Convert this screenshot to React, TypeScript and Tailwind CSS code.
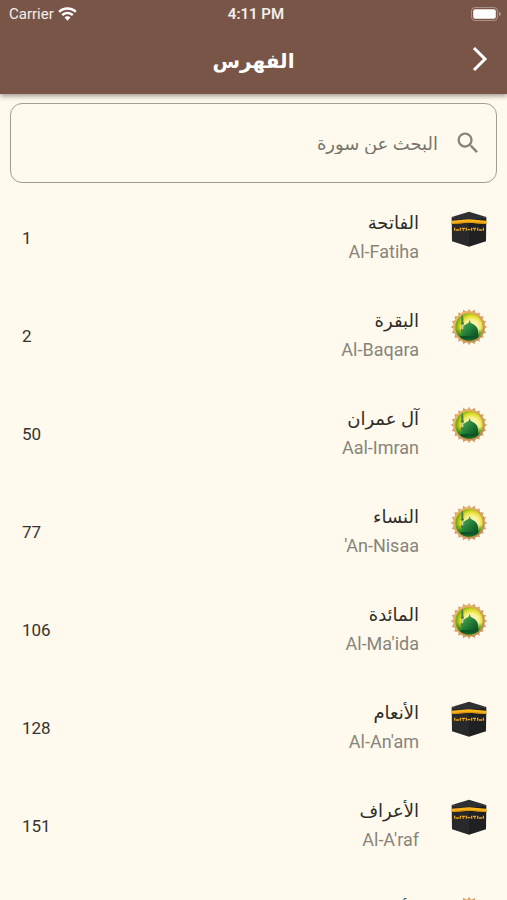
type Surah = {
  name: string;
  latin: string;
  page: number;
  place: 'makkah' | 'madinah';
};

const surahs: Surah[] = [
  { name: 'الفاتحة', latin: 'Al-Fatiha', page: 1, place: 'makkah' },
  { name: 'البقرة', latin: 'Al-Baqara', page: 2, place: 'madinah' },
  { name: 'آل عمران', latin: 'Aal-Imran', page: 50, place: 'madinah' },
  { name: 'النساء', latin: "'An-Nisaa", page: 77, place: 'madinah' },
  { name: 'المائدة', latin: "Al-Ma'ida", page: 106, place: 'madinah' },
  { name: 'الأنعام', latin: "Al-An'am", page: 128, place: 'makkah' },
  { name: 'الأعراف', latin: "Al-A'raf", page: 151, place: 'makkah' },
  { name: 'الأنفال', latin: 'Al-Anfal', page: 177, place: 'madinah' },
];

const WifiIcon = () => (
  <svg width="19" height="14" viewBox="0 0 57 42" fill="#fff" aria-hidden="true">
    <path d="M28.500 1C17.500 1 8 5 1 12l5 5.500c6-6 14-9.500 22.500-9.500s16.500 3.500 22.500 9.500l5-5.500C49 5 39.500 1 28.500 1z" />
    <path d="M28.500 14.500c-7 0-13.500 2.800-18.200 7.300l5 5.300c3.500-3.400 8-5.400 13.200-5.400s9.700 2 13.200 5.400l5-5.300c-4.700-4.500-11.200-7.300-18.200-7.300z" />
    <path d="M28.500 28c-3.400 0-6.500 1.400-8.800 3.600l8.800 9.400 8.800-9.400c-2.300-2.200-5.400-3.600-8.800-3.600z" />
  </svg>
);

const BatteryIcon = () => (
  <svg width="32" height="14" viewBox="0 0 32 14" aria-hidden="true">
    <rect x="0.500" y="0.500" width="26" height="13" rx="3.500" fill="none" stroke="#fff" strokeOpacity="0.35" />
    <rect x="2.200" y="2.200" width="22.600" height="9.600" rx="2" fill="#fff" />
    <path d="M28 4.800c1.200.4 1.900 1.200 1.900 2.200s-.7 1.800-1.900 2.200z" fill="#fff" fillOpacity="0.4" />
  </svg>
);

const ChevronIcon = () => (
  <svg width="16" height="26" viewBox="0 0 16 26" fill="none" stroke="#fff" strokeWidth="3" aria-hidden="true">
    <path d="M2 2l11 11L2 24" />
  </svg>
);

const SearchIcon = () => (
  <svg width="28" height="28" viewBox="0 0 24 24" fill="#87857a" aria-hidden="true">
    <path d="M15.500 14h-.79l-.28-.27A6.471 6.471 0 0 0 16 9.500 6.500 6.500 0 1 0 9.500 16c1.610 0 3.090-.59 4.230-1.570l.27.28v.79l5 4.990L20.490 19l-4.990-5zm-6 0C7.010 14 5 11.990 5 9.500S7.010 5 9.500 5 14 7.010 14 9.500 11.990 14 9.500 14z" />
  </svg>
);

const KaabaIcon = () => (
  <svg width="38" height="38" viewBox="0 0 114 114" aria-hidden="true">
    <path d="M5 21L57 5l52 16-52 13z" fill="#2f3033" />
    <path d="M5 21l52 10v79L6 94z" fill="#29292c" />
    <path d="M109 21L57 31v79l51-16z" fill="#1f2022" />
    <path d="M5 32l52-4 52 4v10l-52-4-52 4z" fill="#fbb416" />
    <path d="M5 39l52-4 52 4v3l-52-4-52 4z" fill="#d98f10" />
    <g fill="#e9a51a">
      <path d="M12 53h4v9h-4zM18 58h9v4h-9zM29 53h4v9h-4zM35 53h10v4H35zM38 58h4v4h-4zM47 53h4v9h-4z" />
      <path d="M53 57h8v4h-8zM63 53h4v9h-4zM69 53h9v4h-9zM72 58h4v4h-4zM81 53h4v9h-4zM87 58h9v4h-9zM98 53h4v9h-4z" />
    </g>
  </svg>
);

const points = Array.from({ length: 20 }, (_, i) => i * 18);

const MosqueIcon = () => (
  <svg width="38" height="38" viewBox="0 0 114 114" aria-hidden="true">
    <defs>
      <radialGradient id="sky" cx="0.6" cy="0.5" r="0.55">
        <stop offset="0" stopColor="#fffde0" />
        <stop offset="0.5" stopColor="#f8f08f" />
        <stop offset="0.75" stopColor="#dfdd24" />
        <stop offset="1" stopColor="#7fae12" />
      </radialGradient>
      <linearGradient id="ground" x1="0" y1="0" x2="0" y2="1">
        <stop offset="0" stopColor="#3b9420" stopOpacity="0" />
        <stop offset="0.5" stopColor="#2f8a24" />
        <stop offset="1" stopColor="#0c5423" />
      </linearGradient>
      <linearGradient id="dome" x1="0" y1="0" x2="1" y2="1">
        <stop offset="0" stopColor="#63b35c" />
        <stop offset="0.5" stopColor="#26843b" />
        <stop offset="1" stopColor="#0b4d22" />
      </linearGradient>
      <linearGradient id="rim" x1="0" y1="0" x2="1" y2="1">
        <stop offset="0" stopColor="#f6bf62" />
        <stop offset="0.5" stopColor="#dba266" />
        <stop offset="1" stopColor="#b37a48" />
      </linearGradient>
      <clipPath id="disc">
        <circle cx="57" cy="57" r="41" />
      </clipPath>
    </defs>
    {points.map(angle => (
      <path key={angle} d="M49 11q6-2 8-9 2 7 8 9z" fill="#d09a63" transform={`rotate(${angle} 57 57)`} />
    ))}
    <circle cx="57" cy="57" r="47" fill="url(#rim)" />
    <circle cx="57" cy="57" r="41" fill="url(#sky)" />
    <g clipPath="url(#disc)">
      <path d="M14 62h86v40H14z" fill="url(#ground)" />
      <path d="M34 84V70c0-14 11-21 22-26 1-3 2-5 3-8 1 3 2 5 3 8 11 5 22 12 22 26v14z" fill="url(#dome)" />
      <path d="M32 84h54v8H32z" fill="#0d5428" />
      <path d="M37 18l3 12v14h2v4h-2l1 24h-8l1-24h-2v-4h2V30z" fill="#477a55" />
      <path d="M34 50h6v14h-6z" fill="#c7d8bd" />
    </g>
  </svg>
);

const StatusBar = () => (
  <div dir="ltr" className="grid grid-cols-3 items-center h-7 pl-[9px] pr-1 text-[15px] text-white/90">
    <div className="flex items-center gap-1">
      <span>Carrier</span>
      <WifiIcon />
    </div>
    <span className="text-center font-semibold">4:11 PM</span>
    <div className="flex justify-end">
      <BatteryIcon />
    </div>
  </div>
);

const Header = () => (
  <header className="relative z-10 shrink-0 bg-[#795548] shadow-[0_2px_5px_rgba(0,0,0,0.4)]">
    <StatusBar />
    <div className="grid grid-cols-[54px_1fr_54px] items-center h-[66px]">
      <button type="button" aria-label="رجوع" className="flex justify-center items-center h-full pb-1">
        <ChevronIcon />
      </button>
      <h1 className="text-center text-xl font-bold text-white">الفهرس</h1>
    </div>
  </header>
);

const SearchBox = () => (
  <label className="flex items-center gap-4 h-20 mx-[10px] mt-[9px] px-[14px] shrink-0 rounded-xl border border-[#a19f94]">
    <SearchIcon />
    <input
      type="text"
      aria-label="البحث عن سورة"
      placeholder="البحث عن سورة"
      className="grow min-w-0 h-10 bg-transparent text-lg text-[#302f2a] outline-none placeholder:text-[#77756c] placeholder:opacity-100"
    />
  </label>
);

const SurahRow = ({ surah }: { surah: Surah }) => (
  <li>
    <a href={`#page-${surah.page}`} className="flex h-[98px] pt-[21px] pr-[19px] pl-[22px]">
      {surah.place === 'makkah' ? <KaabaIcon /> : <MosqueIcon />}
      <div className="grow pr-[31px]">
        <p className="text-lg leading-[26px] text-[#2e2d28]">{surah.name}</p>
        <p dir="ltr" className="mt-1 text-right text-lg leading-6 text-[#87857b]">
          {surah.latin}
        </p>
      </div>
      <span className="pt-4 text-[17px] leading-6 text-[#34332e]">{surah.page}</span>
    </a>
  </li>
);

export default function App() {
  return (
    <div
      dir="rtl"
      lang="ar"
      className="flex flex-col h-screen overflow-hidden bg-[#fffaed] font-[Roboto,'DejaVu_Sans',sans-serif]"
    >
      <Header />
      <SearchBox />
      <ul className="grow min-h-0 mt-[6px] overflow-y-auto [scrollbar-width:none]">
        {surahs.map(surah => (
          <SurahRow key={surah.page} surah={surah} />
        ))}
      </ul>
    </div>
  );
}
